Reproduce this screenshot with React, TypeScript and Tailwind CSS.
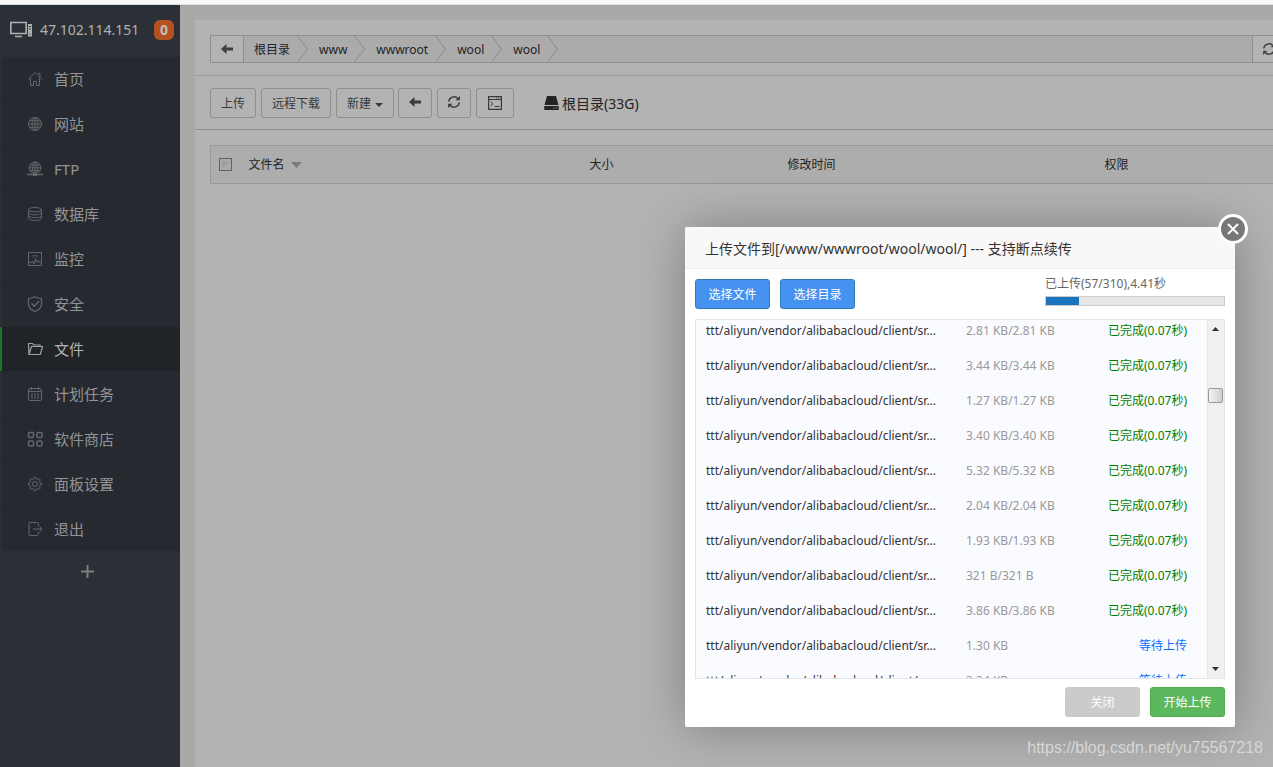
import type { ReactNode } from "react";

const S = ({ children, size = 16, className = "" }: { children: ReactNode; size?: number; className?: string }) => (
  <svg width={size} height={size} viewBox="0 0 16 16" fill="none" stroke="currentColor" strokeWidth="1" className={className} aria-hidden="true">
    {children}
  </svg>
);

const HomeIcon = () => (
  <S>
    <path d="M1 8.5 8 1.5l7 7M3.500 7v7.500h3V10.500h3v4h3V7M11 2.500h2v3" />
  </S>
);
const GlobeIcon = () => (
  <S>
    <circle cx="8" cy="8" r="6.500" />
    <ellipse cx="8" cy="8" rx="3" ry="6.500" />
    <path d="M8 1.500v13M1.500 8h13M2.500 4.800h11M2.500 11.200h11" />
  </S>
);
const FtpIcon = () => (
  <S>
    <circle cx="8" cy="6.800" r="5.800" />
    <ellipse cx="8" cy="6.800" rx="2.700" ry="5.800" />
    <path d="M8 1v12M2.200 6.800h11.600M3.200 4h9.600M3.200 9.600h9.600" />
    <path d="M0 13.500h16M6 14.300h4" strokeWidth="1.400" />
  </S>
);
const DbIcon = () => (
  <S>
    <ellipse cx="8" cy="3.700" rx="6.500" ry="2.200" />
    <path d="M1.500 3.700v8.600c0 1.200 2.900 2.200 6.500 2.200s6.500-1 6.500-2.200V3.700M1.500 6.600c0 1.200 2.900 2.200 6.500 2.200s6.500-1 6.500-2.200M1.500 9.500c0 1.200 2.900 2.200 6.500 2.200s6.500-1 6.500-2.200" />
  </S>
);
const MonitorIcon = () => (
  <S>
    <path d="M1.500 1.500h13v13h-13z" />
    <path d="M5 4.500h6M5 6h6" opacity=".5" />
    <path d="M2 11.500h2.500l1-1.500 1.500 3 1.500-5 1.500 3.500 1.500-2 1 2h2" />
  </S>
);
const ShieldIcon = () => (
  <S>
    <path d="M8 .8c2 1.200 4.200 1.700 6.500 1.700v5c0 4-2.500 6.500-6.500 8-4-1.500-6.500-4-6.500-8v-5C3.800 2.500 6 2 8 .8z" strokeWidth="1.200" />
    <path d="m4.500 7.500 2.700 2.800L12 5" strokeWidth="1.400" />
  </S>
);
const FolderIcon = () => (
  <S>
    <path d="M2 13.500 1.500 2.500h4l1.500 1.500h6v2M2 13.500h11.300L15.500 5.500H4.500z" strokeWidth="1.200" />
  </S>
);
const CalendarIcon = () => (
  <S>
    <rect x="1.500" y="2.500" width="13" height="12" rx="1.500" />
    <path d="M4.500 1v3M11.500 1v3M1.500 5.500h13" />
    <path d="M4 8h8M4 10h8M4 12h8" strokeDasharray="2 1" />
  </S>
);
const AppsIcon = () => (
  <S>
    <g strokeWidth="1.500">
      <rect x="1.500" y="1.500" width="5" height="5" rx="1" />
      <rect x="10" y="1.500" width="5" height="5" rx="1" />
      <rect x="1.500" y="10" width="5" height="5" rx="1" />
      <rect x="10" y="10" width="5" height="5" rx="1" />
    </g>
  </S>
);
const GearIcon = () => (
  <S>
    <circle cx="8" cy="8" r="2.500" />
    <path d="M6.700 3 7.300 1.300h1.400L9.300 3l1.300.5 1.600-.8 1.100 1.100-.8 1.600.5 1.300 1.700.6v1.400l-1.700.6-.5 1.300.8 1.600-1.100 1.100-1.600-.8-1.300.5-.6 1.700H7.300L6.700 13l-1.300-.5-1.600.8-1.100-1.100.8-1.600L3 9.300l-1.700-.6V7.300L3 6.700l.5-1.300-.8-1.600 1.100-1.100 1.600.8z" />
  </S>
);
const ExitIcon = () => (
  <S>
    <path d="M11.500 5V2.500l-1-1h-8l-.5.5v12l.5.500h8l1-1V11M6 8h9M12.500 5.500 15 8l-2.500 2.500" />
  </S>
);

const ArrowLeft = () => (
  <svg width="12" height="10" viewBox="0 0 12 10" fill="currentColor" aria-hidden="true">
    <path d="M0 5 5.500 0v3.500H12v3H5.500V10z" />
  </svg>
);
const Refresh = () => (
  <svg width="12" height="12" viewBox="0 0 12 12" fill="none" stroke="currentColor" strokeWidth="1.500" aria-hidden="true">
    <path d="M.8 5.500A5.200 5.200 0 0 1 9.800 2.500M11.200 6.500A5.200 5.200 0 0 1 2.200 9.500" />
    <path d="M11.900 0v4.300H7.600zM.1 12V7.700h4.300z" fill="currentColor" stroke="none" />
  </svg>
);

const menu = [
  { label: "首页", icon: <HomeIcon /> },
  { label: "网站", icon: <GlobeIcon /> },
  { label: "FTP", icon: <FtpIcon /> },
  { label: "数据库", icon: <DbIcon /> },
  { label: "监控", icon: <MonitorIcon /> },
  { label: "安全", icon: <ShieldIcon /> },
  { label: "文件", icon: <FolderIcon />, active: true },
  { label: "计划任务", icon: <CalendarIcon /> },
  { label: "软件商店", icon: <AppsIcon /> },
  { label: "面板设置", icon: <GearIcon /> },
  { label: "退出", icon: <ExitIcon /> },
];

const crumbs = ["根目录", "www", "wwwroot", "wool", "wool"];

const files = [
  { size: "2.81 KB/2.81 KB", done: true },
  { size: "3.44 KB/3.44 KB", done: true },
  { size: "1.27 KB/1.27 KB", done: true },
  { size: "3.40 KB/3.40 KB", done: true },
  { size: "5.32 KB/5.32 KB", done: true },
  { size: "2.04 KB/2.04 KB", done: true },
  { size: "1.93 KB/1.93 KB", done: true },
  { size: "321 B/321 B", done: true },
  { size: "3.86 KB/3.86 KB", done: true },
  { size: "1.30 KB", done: false },
  { size: "3.34 KB", done: false },
];

const toolBtn = "flex h-[30px] items-center justify-center rounded-[3px] border border-[#8f8f8f] text-[#3a3a3a]";

function Sidebar() {
  return (
    <aside className="w-[180px] shrink-0 bg-[#2b3037]">
      <div className="flex h-[52px] items-center pb-[3px] pl-[10px] text-[#b0b0b0]">
        <svg width="23" height="17" viewBox="0 0 23 17" fill="none" stroke="currentColor" aria-hidden="true">
          <path d="M.8 1.500h15.400v11H.8z" strokeWidth="1.600" />
          <path d="M5 15.500h7" strokeWidth="1.500" />
          <path d="M18 3h4v12.500h-4z" fill="currentColor" stroke="none" />
          <path d="M19 5.500h2M19 8h2M19.500 13h1" stroke="#2b3037" />
        </svg>
        <span className="ml-[7px] text-[14px]">47.102.114.151</span>
        <span className="ml-auto mr-[6px] flex h-5 w-5 items-center justify-center rounded-md bg-[#b4511d] text-[14px] font-bold text-[#bdbdbd]">0</span>
      </div>
      <nav className="bg-[#262a30]">
        {menu.map((m) => (
          <a
            key={m.label}
            href="#"
            className={
              m.active
                ? "mb-px flex h-[44px] items-center border-l-2 border-[#147a26] bg-[#202327] pl-[25px] text-[15px] text-[#b3b3b3]"
                : "mb-px flex h-[44px] items-center border-l-2 border-[#2b2e2f] pl-[25px] text-[15px] text-[#929497] last:mb-0"
            }
          >
            <span className={m.active ? "text-[#a0a0a0]" : "text-[#64676a]"}>{m.icon}</span>
            <span className="ml-[11px]">{m.label}</span>
          </a>
        ))}
      </nav>
      <button aria-label="添加" className="flex h-[41px] w-full items-center justify-center pr-[5px] text-[#7c7e80]">
        <svg width="13" height="13" viewBox="0 0 13 13" stroke="currentColor" strokeWidth="2" aria-hidden="true">
          <path d="M6.500 0v13M0 6.500h13" />
        </svg>
      </button>
    </aside>
  );
}

function FileManager() {
  return (
    <main className="mt-[15px] ml-[15px] min-w-0 flex-1 overflow-hidden bg-[#b3b3b3] text-[12px] text-[#232323]">
      <div className="border-b border-[#999] pt-[15px] pb-3 pl-[15px]">
        <div className="-mr-3 flex h-7 border border-[#8f8f8f] bg-[#ababab]">
          <button aria-label="返回" className="flex w-[33px] items-center justify-center border-r border-[#8f8f8f] bg-[#b3b3b3] text-[#3f3f3f]">
            <ArrowLeft />
          </button>
          <ol className="flex flex-1">
            {crumbs.map((c, i) => (
              <li key={i} className="flex items-center pl-[11px] first:pl-[10px]">
                <a href="#" className="pt-[2px] pr-[7px]">{c}</a>
                <svg width="11" height="26" viewBox="0 0 11 26" fill="none" stroke="#8a8a90" aria-hidden="true">
                  <path d="M.5 0 10.500 13 .5 26" />
                </svg>
              </li>
            ))}
          </ol>
          <button aria-label="刷新路径" className="flex w-8 items-center justify-center border-l border-[#8f8f8f] bg-[#b3b3b3] text-[#3f3f3f]">
            <Refresh />
          </button>
        </div>
      </div>

      <div className="flex items-center border-b border-[#8f8f8f] pt-3 pb-[11px] pl-[15px]">
        <button className={toolBtn + " w-[46px] pt-[2px]"}>上传</button>
        <button className={toolBtn + " ml-[5px] w-[70px] pt-[2px]"}>远程下载</button>
        <button className={toolBtn + " ml-[5px] w-[58px] gap-1 pt-[2px]"}>
          新建
          <svg width="8" height="4" viewBox="0 0 8 4" fill="currentColor" className="mt-[2px]" aria-hidden="true">
            <path d="M0 0h8L4 4z" />
          </svg>
        </button>
        <button aria-label="后退" className={toolBtn + " ml-1 w-[34px] pb-[2px]"}><ArrowLeft /></button>
        <button aria-label="刷新" className={toolBtn + " ml-[5px] w-[34px] pb-[2px]"}><Refresh /></button>
        <button aria-label="终端" className={toolBtn + " ml-[5px] w-[38px]"}>
          <svg width="14" height="14" viewBox="0 0 14 14" fill="none" stroke="currentColor" aria-hidden="true">
            <path d="M.6.6h12.800v12.800H.6z" strokeWidth="1.200" />
            <path d="M1 3.500h12M8 2h1M10 2h1M12 2h.6M2.500 5.500 5 7.800 2.500 10M6.500 10.500h5" />
          </svg>
        </button>
        <a href="#" className="ml-[30px] flex items-center gap-[3px] text-[14px]">
          <svg width="15" height="14" viewBox="0 0 15 14" fill="currentColor" aria-hidden="true">
            <path d="M3 0h9l2.500 9H.5zM.3 10h14.400v4H.3z" />
            <path d="M9.500 12h1M12 12h1" stroke="#b3b3b3" />
          </svg>
          根目录(33G)
        </a>
      </div>

      <div className="pt-[15px] pl-[15px]">
        <table className="w-full table-fixed border border-r-0 border-[#999] bg-[#adadad]">
          <thead>
            <tr className="h-[38px] text-left">
              <th className="w-[38px] pl-2">
                <input
                  type="checkbox"
                  aria-label="全选"
                  className="block h-[13px] w-[13px] appearance-none border border-[#5f6062] bg-linear-to-br from-[#8b8d90] to-[#b5b6b8] shadow-[inset_0_0_0_2px_#aaabac]"
                />
              </th>
              <th className="w-[341px] font-normal">
                <span className="flex items-center gap-[6px]">
                  文件名
                  <svg width="11" height="6" viewBox="0 0 11 6" fill="#7c7c7c" aria-hidden="true"><path d="M0 0h11L5.500 6z" /></svg>
                </span>
              </th>
              <th className="w-[198px] font-normal">大小</th>
              <th className="w-[317px] font-normal">修改时间</th>
              <th className="font-normal">权限</th>
            </tr>
          </thead>
        </table>
      </div>
    </main>
  );
}

function UploadDialog() {
  return (
    <section
      role="dialog"
      aria-labelledby="upload-title"
      className="absolute top-[227px] right-[38px] w-[550px] rounded-xs bg-white text-[12px] text-[#333] shadow-[1px_1px_50px_rgba(0,0,0,0.3)]"
    >
      <h2 id="upload-title" className="flex h-[42px] items-center rounded-t-xs border-b border-[#eee] bg-[#f8f8f8] pt-[2px] pl-5 text-[14px]">
        上传文件到[/www/wwwroot/wool/wool/] --- 支持断点续传
      </h2>
      <button
        aria-label="关闭窗口"
        className="absolute -top-[13px] -right-[13px] flex h-[30px] w-[30px] items-center justify-center rounded-full border-3 border-white bg-[#787878]"
      >
        <svg width="12" height="12" viewBox="0 0 12 12" stroke="white" strokeWidth="2" aria-hidden="true">
          <path d="m1 1 10 10M11 1 1 11" />
        </svg>
      </button>

      <div className="p-[10px]">
        <div className="flex items-start">
          <button className="h-[30px] w-[75px] rounded-[3px] border border-[#2f7db8] bg-[#4692f0] pt-[2px] text-white">选择文件</button>
          <button className="ml-[10px] h-[30px] w-[75px] rounded-[3px] border border-[#2f7db8] bg-[#4692f0] pt-[2px] text-white">选择目录</button>
          <div className="-mt-1 ml-auto w-[180px] text-[#666]">
            <p className="mb-1 leading-[17px]">已上传(57/310),4.41秒</p>
            <div className="h-[10px] border border-[#ccc] bg-[#e8e8e8]">
              <div className="h-full w-[18.5%] bg-[#1a74bd]" />
            </div>
          </div>
        </div>

        <div className="mt-[10px] flex h-[360px] overflow-hidden border border-[#e2e4e8] bg-[#fafbff]">
          <ul className="-mt-[7px] flex-1">
            {files.map((f, i) => (
              <li key={i} className="flex h-[35px] items-center pr-5 pl-[10px]">
                <span className="w-[260px] text-[#333]">ttt/aliyun/vendor/alibabacloud/client/sr...</span>
                <span className="text-[#999]">{f.size}</span>
                <span className={f.done ? "ml-auto text-[#008000]" : "ml-auto text-[#0a6cff]"}>{f.done ? "已完成(0.07秒)" : "等待上传"}</span>
              </li>
            ))}
          </ul>
          <div className="flex w-[17px] flex-col items-center border-l border-[#e6e6ea] bg-[#f0f0f0] py-[7px] pr-px">
            <svg width="7" height="4" viewBox="0 0 7 4" fill="#333" aria-hidden="true"><path d="M0 4h7L3.500 0z" /></svg>
            <div className="mt-[57px] h-[15px] w-[15px] rounded-[2px] border border-[#999] bg-linear-to-r from-[#f4f4f4] to-[#cfcfd1]" />
            <svg width="7" height="4" viewBox="0 0 7 4" fill="#333" className="mt-auto" aria-hidden="true"><path d="M0 0h7L3.500 4z" /></svg>
          </div>
        </div>

        <div className="mt-2 flex justify-end gap-[10px]">
          <button className="h-[30px] w-[75px] rounded-[3px] bg-[#cbcbcb] pt-[2px] text-white">关闭</button>
          <button className="h-[30px] w-[75px] rounded-[3px] border border-[#4cae4c] bg-[#5cb85c] pt-[2px] text-white">开始上传</button>
        </div>
      </div>
    </section>
  );
}

export default function App() {
  return (
    <div className="relative flex min-h-screen flex-col overflow-hidden bg-[#a9a9a9] font-['Noto_Sans','Noto_Sans_CJK_SC',sans-serif]">
      <div className="h-[5px] border-b border-[#ddd] bg-[#f8f8f8]" />
      <div className="flex flex-1">
        <Sidebar />
        <FileManager />
      </div>
      <UploadDialog />
      <p className="absolute right-[10px] bottom-[7px] font-['Liberation_Sans',sans-serif] text-[16px] text-[#d6d6d6]">
        https://blog.csdn.net/yu75567218
      </p>
    </div>
  );
}
